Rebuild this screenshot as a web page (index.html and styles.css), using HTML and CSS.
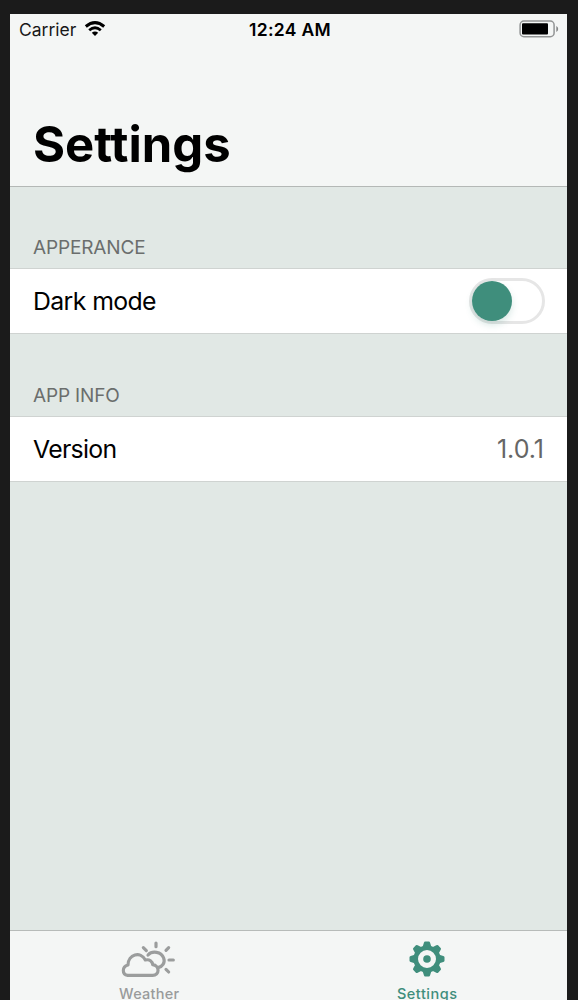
FILE: index.html
```html
<!DOCTYPE html>
<html lang="en">
<head>
<meta charset="utf-8">
<title>Settings</title>
<link rel="stylesheet" href="styles.css">
</head>
<body>
<div class="phone">
  <header class="header">
    <div class="status">
      <div class="network">
        <span class="carrier">Carrier</span>
        <svg class="wifi" viewBox="0 0 22 16">
          <path d="M1.8 5.5Q11-2.3 20.2 5.5" fill="none" stroke="#000" stroke-width="3"/>
          <path d="M5.2 9.2Q11 4.2 16.8 9.2" fill="none" stroke="#000" stroke-width="2.8"/>
          <path d="M7.8 11.7Q11 9.3 14.2 11.7L11 15Z"/>
        </svg>
      </div>
      <span class="clock">12:24 AM</span>
      <svg class="battery" viewBox="0 0 40 18">
        <rect x="1.1" y="1.1" width="34" height="15.6" rx="3.8" fill="none" stroke="#929494" stroke-width="1.5"/>
        <rect x="3" y="3.2" width="26" height="11.4" rx="1"/>
        <path d="M37.3 6.1Q39.2 7 39.2 9T37.3 11.9Z" fill="#858787"/>
      </svg>
    </div>
    <h1 class="title">Settings</h1>
  </header>
  <main class="content">
    <h2 class="section-title section-appearance">APPERANCE</h2>
    <div class="row">
      <span class="label-dark">Dark mode</span>
      <div class="switch"><div class="knob"></div></div>
    </div>
    <h2 class="section-title section-info">APP INFO</h2>
    <div class="row">
      <span class="label-version">Version</span>
      <span class="value">1.0.1</span>
    </div>
  </main>
  <nav class="tabs">
    <div class="tab">
      <svg class="weather-icon" viewBox="60 60 171 117" fill="none" stroke="#9b9d9d" stroke-width="9.5" stroke-linecap="round" stroke-linejoin="round">
        <path d="M83 166C66 164 65 140 84 135C84 103 122 92 136 120C149 117 157 124 158 134C180 137 179 166 158 166Z"/>
        <path d="M144 105C157 91 184 95 191 114C196 127 188 140 174 143"/>
        <path d="M168 69V80M130 83L139 92M206 83L198 91M207 120H220M198 148L206 156"/>
      </svg>
      <span class="tab-weather">Weather</span>
    </div>
    <div class="tab active">
      <svg class="gear-icon" viewBox="-18 -18 36 36" fill="#3f8e7c">
        <defs><path id="tooth" d="M-4.6-11.5L-3.1-16.3Q-2.8-17.5-1.8-17.5H1.8Q2.8-17.5 3.1-16.3L4.6-11.5Z"/></defs>
        <circle r="11.3" fill="none" stroke="#3f8e7c" stroke-width="4.6"/>
        <use href="#tooth"/><use href="#tooth" transform="rotate(45)"/><use href="#tooth" transform="rotate(90)"/><use href="#tooth" transform="rotate(135)"/><use href="#tooth" transform="rotate(180)"/><use href="#tooth" transform="rotate(225)"/><use href="#tooth" transform="rotate(270)"/><use href="#tooth" transform="rotate(315)"/>
        <circle r="3.8"/>
      </svg>
      <span class="tab-settings">Settings</span>
    </div>
  </nav>
</div>
</body>
</html>
```
FILE: styles.css
```css
* { box-sizing: border-box; }
body {
  margin: 0;
  height: 1000px;
  overflow: hidden;
  padding: 14px 11px 0 10px;
  background: #1b1b1b;
  font-family: Inter, "Liberation Sans", sans-serif;
  color: #000;
}
.phone {
  height: 986px;
  display: flex;
  flex-direction: column;
  background: #e1e8e5;
  overflow: hidden;
}
.header {
  height: 173px;
  flex: none;
  background: #f4f6f5;
  border-bottom: 1px solid #b4b8b6;
}
.status {
  height: 30px;
  padding: 0 8px 0 9px;
  display: grid;
  grid-template-columns: 1fr auto 1fr;
  align-items: center;
  line-height: 28px;
}
.network { display: flex; align-items: center; gap: 8px; }
.carrier { font-size: 17.5px; color: #171717; padding-top: 2px; }
.wifi { width: 22px; height: 16px; margin-top: -1px; }
.clock { font-size: 17.5px; font-weight: 600; letter-spacing: .3px; padding: 2px 0 0 2px; }
.battery { width: 40px; height: 18px; justify-self: end; }
.title {
  margin: 71px 0 0 23px;
  font-size: 49px;
  line-height: 60px;
  font-weight: 700;
}
.content { flex: 1; }
.section-title {
  margin: 0;
  padding: 0 23px;
  font-size: 19px;
  line-height: 24px;
  font-weight: 400;
  letter-spacing: -.15px;
  color: #6b6e6d;
}
.section-appearance { padding-top: 49px; height: 81px; }
.section-info { padding-top: 50px; height: 82px; }
.row {
  height: 66px;
  padding: 0 23px;
  display: flex;
  align-items: center;
  justify-content: space-between;
  background: #fff;
  border: solid #cfd3d1;
  border-width: 1px 0;
  font-size: 25px;
}
.label-dark { letter-spacing: -.6px; font-size: 24.8px; }
.label-version { letter-spacing: -.7px; font-size: 24.8px; }
.value { color: #666; }
.switch {
  width: 76px;
  height: 46px;
  border: 3px solid #e6e6e6;
  border-radius: 23px;
  margin: -1px -1px 0 0;
}
.knob {
  width: 40px;
  height: 40px;
  border-radius: 50%;
  background: #3f8e7c;
  box-shadow: 0 4px 7px rgba(63, 142, 124, .2);
}
.tabs {
  height: 70px;
  flex: none;
  display: grid;
  grid-template-columns: 1fr 1fr;
  background: #f4f6f5;
  border-top: 1px solid #b7bbb9;
  font-size: 14.5px;
  font-weight: 500;
  color: #999b9b;
}
.tab { display: flex; flex-direction: column; align-items: center; line-height: 18px; padding: 9px 1px 0 0; }
.active { color: #3f8e7c; padding-right: 2px; }
.weather-icon { width: 57px; height: 39px; margin-bottom: 6px; }
.gear-icon { width: 36px; height: 36px; margin: 1px 0 8px; }
.tab-weather { letter-spacing: .25px; padding-left: 1px; }
.tab-settings { letter-spacing: .5px; padding-left: 1px; }
```
